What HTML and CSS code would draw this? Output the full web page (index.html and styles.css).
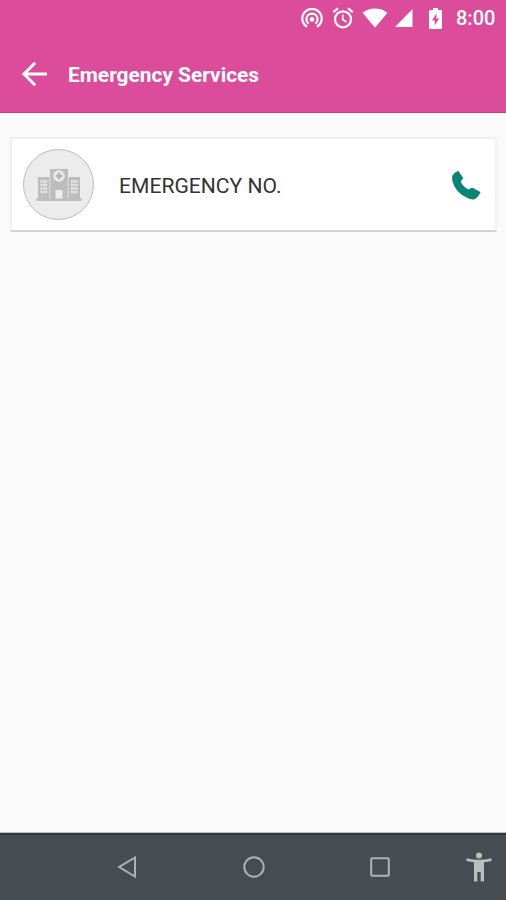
FILE: index.html
```html
<!DOCTYPE html>
<html lang="en">
<head>
    <meta charset="UTF-8">
    <meta name="viewport" content="width=device-width, initial-scale=1.0">
    <title>Emergency Services</title>
    <link rel="stylesheet" href="styles.css">
</head>
<body>
    <header class="header">
        <div class="status-bar">
            <svg class="icon-hotspot" width="22" height="21" viewBox="0 0 22 21" fill="none" stroke="#fff" stroke-width="2.2">
                <path d="M6 18.8A9.7 9.7 0 1 1 16 18.8"/>
                <path d="M7.6 15.6A5.6 5.6 0 1 1 14.4 15.6"/>
                <circle cx="11" cy="11.4" r="2.3" fill="#fff" stroke="none"/>
            </svg>
            <svg class="icon-alarm" width="22" height="22" viewBox="0 0 22 22" fill="none" stroke="#fff" stroke-width="2.2">
                <circle cx="11" cy="12.3" r="8"/>
                <path d="M1.2 5.2L6 1.3M20.8 5.2L16 1.3"/>
                <path d="M10.7 7.5v5l4 2.6" stroke-width="1.6"/>
            </svg>
            <svg class="icon-wifi" width="26" height="20" viewBox="0 0 26 20" fill="#fff">
                <path d="M.5 4.7C7.5-1 18.5-1 25.5 4.7L13 19.8z"/>
            </svg>
            <svg class="icon-signal" width="18" height="18" viewBox="0 0 18 18" fill="#fff">
                <path d="M17.5 0v18H0z"/>
            </svg>
            <svg class="icon-battery" width="13" height="21" viewBox="0 0 13 21">
                <path fill="#fff" d="M4 0h5v2h3a1 1 0 0 1 1 1v17a1 1 0 0 1-1 1H1a1 1 0 0 1-1-1V3a1 1 0 0 1 1-1h3z"/>
                <path fill="#db4c9a" d="M7.5 5.5L3 12.5h2.8v5L10 10.5H7.5z"/>
            </svg>
            <span class="time">8:00</span>
        </div>
        <div class="toolbar">
            <svg class="back" width="26" height="26" viewBox="0 0 26 26" fill="none" stroke="#fff" stroke-width="3">
                <path d="M26 13H3M14.2 1.7L3 13l11.2 11.3"/>
            </svg>
            <h1 class="title">Emergency Services</h1>
        </div>
    </header>

    <main class="content">
        <div class="card">
            <div class="avatar">
                <svg width="46" height="32" viewBox="0 0 46 32">
                    <path fill="#bdbdbd" d="M2 8h12V0h18v8h12v21h1.5v3H.5v-3H2z"/>
                    <path fill="#ececec" d="M13.4 8h.8v21h-.8zM31.8 8h.8v21h-.8zM19.5 21h7v8.5h-7z"/>
                    <circle cx="23" cy="7" r="5.8" fill="#ececec"/>
                    <path stroke="#b5b5b5" stroke-width="2.4" d="M23 3.5v7M19.5 7h7"/>
                    <path stroke="#ececec" stroke-width="2.3" stroke-dasharray="1.8 .6" d="M4.5 12.5h6.6M4.5 16h6.6M4.5 19.5h6.6M4.5 23h6.6M35 12.5h6.6M35 16h6.6M35 19.5h6.6M35 23h6.6"/>
                </svg>
            </div>
            <span class="name">EMERGENCY NO.</span>
            <svg class="call" width="29" height="29" viewBox="0 0 29 29" fill="#078673">
                <path d="M5.6.2Q6.4-.2 7 .7L10.8 6.5Q11.3 7.4 10.5 8.2L8.7 10.3Q10.5 15.5 16.3 18.4L19.2 16.9Q20.2 16.4 21.1 16.9L27.9 20.7Q28.8 21.3 28.2 22.2Q25.5 26.7 22.6 28.3Q20.5 28.8 17.3 27.7C8.5 24.4 2.5 18.5.3 9.5Q-.2 6 .6 4.3Q2.4 1.4 5.6.2z"/>
            </svg>
        </div>
    </main>

    <nav class="nav-bar">
        <svg class="nav-back" width="20" height="24" viewBox="0 0 20 24" fill="none" stroke="#abb3b3" stroke-width="2">
            <path d="M18 2.5v19L2.2 12z"/>
        </svg>
        <svg class="nav-home" width="22" height="22" viewBox="0 0 22 22" fill="none" stroke="#abb3b3" stroke-width="2">
            <circle cx="11" cy="11" r="9.7"/>
        </svg>
        <svg class="nav-recent" width="20" height="20" viewBox="0 0 20 20" fill="none" stroke="#abb3b3" stroke-width="2">
            <rect x="1.2" y="1.2" width="17.6" height="17.6" rx="1"/>
        </svg>
        <svg class="nav-access" width="26" height="30" viewBox="0 0 26 30" fill="#b9c0c0">
            <circle cx="13" cy="3.5" r="3"/>
            <path d="M.5 6.2Q13 9.3 25.5 6.2v2.8q-4 .9-7.5 1.2V29.500h-3.300V20h-3.400v9.500h-3.300V10.200Q4.500 9.900.5 9z"/>
        </svg>
    </nav>
</body>
</html>
```
FILE: styles.css
```css
* {
    box-sizing: border-box;
}
body {
    margin: 0;
    height: 900px;
    display: flex;
    flex-direction: column;
    font-family: Roboto, "Liberation Sans", sans-serif;
    background-color: #fafafa;
}
svg {
    display: block;
    flex: none;
}
.header {
    height: 113px;
    background-color: #db4c9a;
    border-bottom: 1px solid #c93984;
}
.status-bar {
    height: 36px;
    display: flex;
    align-items: center;
    justify-content: flex-end;
    padding-right: 11px;
    color: #fff;
}
.icon-alarm {
    margin-left: 9px;
}
.icon-wifi {
    margin-left: 8px;
}
.icon-signal {
    margin-left: 7px;
}
.icon-battery {
    margin-left: 16px;
}
.time {
    width: 39px;
    margin-left: 14px;
    font-size: 20px;
    font-weight: 500;
    line-height: 36px;
    white-space: nowrap;
}
.toolbar {
    height: 76px;
    display: flex;
    align-items: center;
    padding-left: 21px;
}
.title {
    margin: 1px 0 0 21px;
    color: #fff;
    font-size: 20.9px;
    font-weight: 700;
    line-height: 24px;
}
.content {
    flex: 1;
    padding: 24px 9px 24px 10px;
}
.card {
    height: 95px;
    display: flex;
    align-items: center;
    padding: 0 14px 0 11px;
    background-color: #fff;
    border: 2px solid #f0f0f0;
    border-bottom-color: #d2d2d2;
}
.avatar {
    width: 71px;
    height: 71px;
    display: flex;
    align-items: center;
    justify-content: center;
    background-color: #ececec;
    border: 1px solid #bcbcbc;
    border-radius: 50%;
}
.name {
    flex: 1;
    margin: 1px 0 0 25px;
    color: #333;
    font-size: 21.1px;
}
.call {
    margin-top: 1px;
}
.nav-bar {
    height: 67px;
    display: flex;
    align-items: center;
    padding: 0 0 2px 117px;
    background-color: #454d52;
    border-top: 2px solid #33373c;
    box-shadow: 0 -1px 0 #b9bcbf;
}
.nav-home {
    margin-left: 106px;
}
.nav-recent {
    margin-left: 105px;
}
.nav-access {
    margin-left: 76px;
}
```
